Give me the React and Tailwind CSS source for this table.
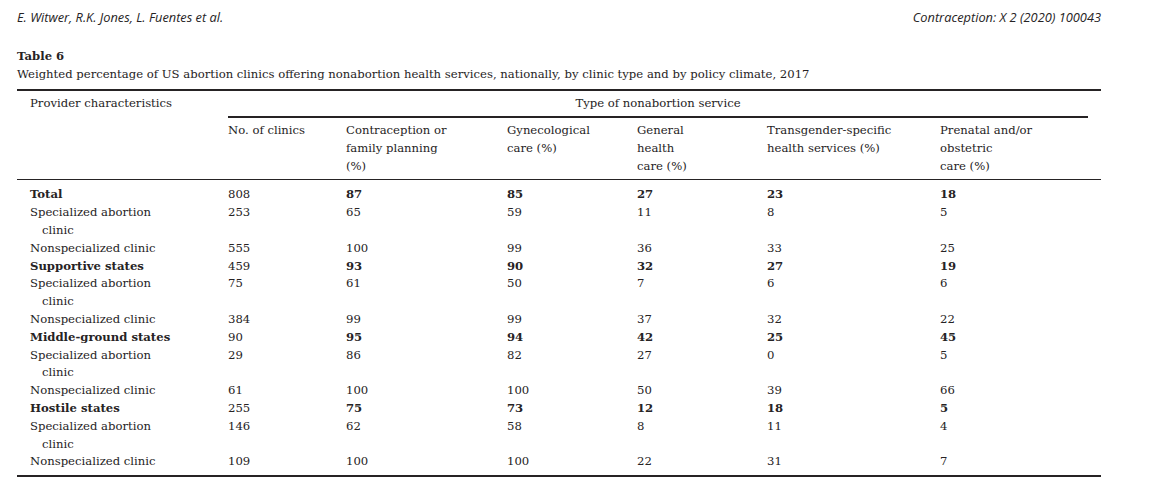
import React from 'react';

const cols = '211px 118px 161px 130px 130px 173px 161px';

const rows = [
  { label: 'Total', bold: true, v: ['808', '87', '85', '27', '23', '18'] },
  { label: 'Specialized abortion', wrap: 'clinic', v: ['253', '65', '59', '11', '8', '5'] },
  { label: 'Nonspecialized clinic', v: ['555', '100', '99', '36', '33', '25'] },
  { label: 'Supportive states', bold: true, v: ['459', '93', '90', '32', '27', '19'] },
  { label: 'Specialized abortion', wrap: 'clinic', v: ['75', '61', '50', '7', '6', '6'] },
  { label: 'Nonspecialized clinic', v: ['384', '99', '99', '37', '32', '22'] },
  { label: 'Middle-ground states', bold: true, v: ['90', '95', '94', '42', '25', '45'] },
  { label: 'Specialized abortion', wrap: 'clinic', v: ['29', '86', '82', '27', '0', '5'] },
  { label: 'Nonspecialized clinic', v: ['61', '100', '100', '50', '39', '66'] },
  { label: 'Hostile states', bold: true, v: ['255', '75', '73', '12', '18', '5'] },
  { label: 'Specialized abortion', wrap: 'clinic', v: ['146', '62', '58', '8', '11', '4'] },
  { label: 'Nonspecialized clinic', v: ['109', '100', '100', '22', '31', '7'] },
];

const heads = [
  ['No. of clinics'],
  ['Contraception or', 'family planning', '(%)'],
  ['Gynecological', 'care (%)'],
  ['General', 'health', 'care (%)'],
  ['Transgender-specific', 'health services (%)'],
  ['Prenatal and/or', 'obstetric', 'care (%)'],
];

export default function App() {
  return (
    <div className="w-[1174px] h-[495px] bg-white text-[#262324] overflow-hidden">
      <div className="w-[1084px] ml-[17px]">
        <div className="flex justify-between pt-[9px] text-[12.8px] leading-[16px] italic font-['Open_Sans',sans-serif]">
          <span>E. Witwer, R.K. Jones, L. Fuentes et al.</span>
          <span>Contraception: X 2 (2020) 100043</span>
        </div>
        <div className="mt-[22px] font-['DejaVu_Serif',serif] text-[11.65px] leading-[18px]">
          <div className="font-bold">Table 6</div>
          <div>Weighted percentage of US abortion clinics offering nonabortion health services, nationally, by clinic type and by policy climate, 2017</div>
        </div>
        <div className="mt-[6px] border-t-2 border-[#262324] font-['DejaVu_Serif',serif] text-[11.65px] leading-[17.8px]">
          <div className="grid" style={{ gridTemplateColumns: cols }}>
            <div className="pl-[13px] pt-[4px] h-[27px]">Provider characteristics</div>
            <div className="col-span-6 pt-[4px] mr-[13px] text-center border-b-2 border-[#262324]">Type of nonabortion service</div>
            {heads.map((h, i) => (
              <div key={i} className={`${i === 0 ? 'col-start-2' : ''} pt-[4px] pb-[4px]`}>
                {h.map((l, j) => (
                  <div key={j}>{l}</div>
                ))}
              </div>
            ))}
          </div>
          <div className="border-t border-[#262324] pt-[6px] pb-[4px] border-b-2">
            {rows.map((r, i) => (
              <div key={i} className="grid" style={{ gridTemplateColumns: cols }}>
                <div className={`pl-[13px] ${r.bold ? 'font-bold' : ''}`}>
                  <div>{r.label}</div>
                  {r.wrap && <div className="pl-[12px]">{r.wrap}</div>}
                </div>
                {r.v.map((x, j) => (
                  <div key={j} className={j > 0 && r.bold ? 'font-bold' : ''}>{x}</div>
                ))}
              </div>
            ))}
          </div>
        </div>
      </div>
    </div>
  );
}
